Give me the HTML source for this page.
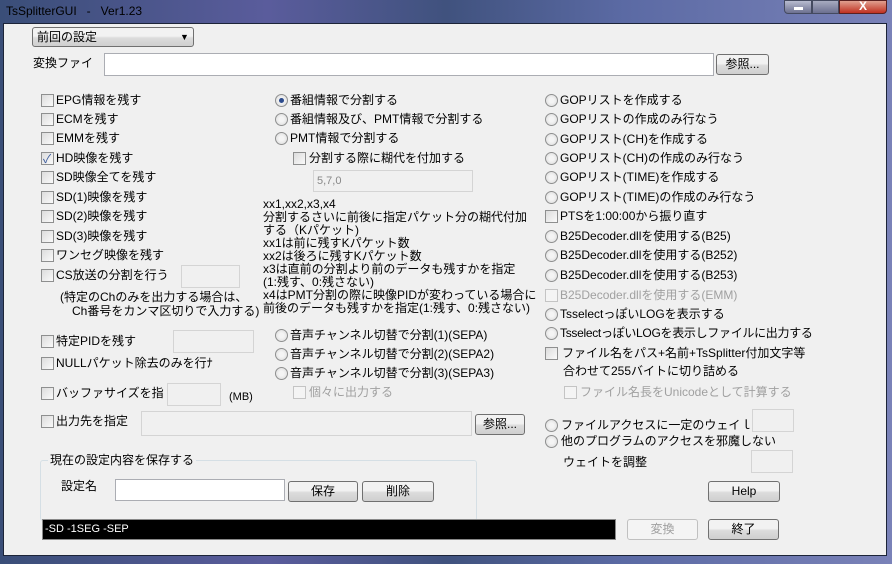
<!DOCTYPE html>
<html><head><meta charset="utf-8"><style>
*{box-sizing:border-box;margin:0;padding:0}
body{width:892px;height:564px;overflow:hidden;position:relative;font-family:"Liberation Sans","Noto Sans CJK JP",sans-serif;font-size:12px;color:#000;background:linear-gradient(90deg,#3a4e78 0%,#5a5c9c 30%,#40527e 50%,#5b6aa4 70%,#7a82b8 100%)}
.a{position:absolute;white-space:nowrap;line-height:14px}
.cl{position:absolute;left:3px;top:23px;width:884px;height:533px;background:#f0f0f0;border:1px solid #1c2438}
.cb{position:absolute;width:13px;height:13px;border:1px solid #8e8f8f;background:linear-gradient(135deg,#dcdcdc,#fafafa)}
.rd{position:absolute;width:13px;height:13px;border-radius:50%;border:1px solid #8e8f8f;background:radial-gradient(circle,#f4f4f4 30%,#d8d8d8 100%)}
.rd.on::after{content:"";position:absolute;left:3px;top:3px;width:5px;height:5px;border-radius:50%;background:#2b4a8c}
.tb{position:absolute;background:#fff;border:1px solid #c8c8c8}
.tb.g{background:#f0f0f0;border-color:#d4d4d4}
.bt{position:absolute;border:1px solid #707070;border-radius:3px;background:linear-gradient(#f2f2f2 45%,#dcdcdc 55%,#cfcfcf);text-align:center;line-height:18px}
.dis{color:#a0a0a0}
</style></head><body>
<div class="a" style="left:6px;top:4px;color:#000;font-size:12px">TsSplitterGUI &nbsp; - &nbsp; Ver1.23</div>
<div style="position:absolute;left:784px;top:0;width:28px;height:14px;border:1px solid #444a60;border-radius:0 0 0 4px;background:linear-gradient(#b8bcd0,#6c7090)"><div style="position:absolute;left:9px;top:6px;width:9px;height:3px;background:#fff"></div></div>
<div style="position:absolute;left:812px;top:0;width:27px;height:14px;border:1px solid #444a60;background:linear-gradient(#a8acc0,#6c7090)"></div>
<div style="position:absolute;left:839px;top:0;width:48px;height:14px;border:1px solid #5a2020;border-radius:0 0 4px 0;background:linear-gradient(#e0a090,#c03020);color:#fff;text-align:center;font-weight:bold;line-height:10px">X</div>
<div class="cl"></div>

<div style="position:absolute;left:32px;top:27px;width:162px;height:20px;border:1px solid #707070;border-radius:3px;background:linear-gradient(#f2f2f2 45%,#dcdcdc 55%,#cfcfcf)"></div>
<div class="a" style="left:37px;top:30px">前回の設定</div><div class="a" style="left:180px;top:30px;font-size:9px">▼</div>
<div class="a" style="left:33px;top:56px">変換ファイ</div>
<div class="tb" style="left:104px;top:53px;width:610px;height:23px;border-color:#abadb3"></div>
<div class="bt" style="left:716px;top:54px;width:53px;height:21px">参照...</div>

<!-- left column -->
<div class="cb" style="left:41px;top:94px"></div><div class="a" style="left:56px;top:93px">EPG情報を残す</div>
<div class="cb" style="left:41px;top:113px"></div><div class="a" style="left:56px;top:112px">ECMを残す</div>
<div class="cb" style="left:41px;top:132px"></div><div class="a" style="left:56px;top:131px">EMMを残す</div>
<div class="cb" style="left:41px;top:152px"><span style="position:absolute;left:1px;top:-3px;color:#3a5a9c;font-size:12px">✓</span></div><div class="a" style="left:56px;top:151px">HD映像を残す</div>
<div class="cb" style="left:41px;top:171px"></div><div class="a" style="left:56px;top:170px">SD映像全てを残す</div>
<div class="cb" style="left:41px;top:191px"></div><div class="a" style="left:56px;top:190px">SD(1)映像を残す</div>
<div class="cb" style="left:41px;top:210px"></div><div class="a" style="left:56px;top:209px">SD(2)映像を残す</div>
<div class="cb" style="left:41px;top:230px"></div><div class="a" style="left:56px;top:229px">SD(3)映像を残す</div>
<div class="cb" style="left:41px;top:249px"></div><div class="a" style="left:56px;top:248px">ワンセグ映像を残す</div>
<div class="cb" style="left:41px;top:269px"></div><div class="a" style="left:56px;top:268px">CS放送の分割を行う</div>
<div class="tb g" style="left:181px;top:265px;width:59px;height:23px"></div>
<div class="a" style="left:60px;top:290px">(特定のChのみを出力する場合は、</div>
<div class="a" style="left:72px;top:304px">Ch番号をカンマ区切りで入力する)</div>
<div class="cb" style="left:41px;top:335px"></div><div class="a" style="left:56px;top:334px">特定PIDを残す</div>
<div class="tb g" style="left:173px;top:330px;width:81px;height:23px"></div>
<div class="cb" style="left:41px;top:357px"></div><div class="a" style="left:56px;top:356px">NULLパケット除去のみを行ﾅ</div>
<div class="cb" style="left:41px;top:387px"></div><div class="a" style="left:56px;top:386px">バッファサイズを指</div>
<div class="tb g" style="left:167px;top:383px;width:54px;height:23px"></div>
<div class="a" style="left:229px;top:390px;font-size:11px">(MB)</div>
<div class="cb" style="left:41px;top:415px"></div><div class="a" style="left:56px;top:414px">出力先を指定</div>
<div class="tb g" style="left:141px;top:411px;width:331px;height:25px"></div>
<div class="bt" style="left:475px;top:414px;width:50px;height:21px">参照...</div>

<div style="position:absolute;left:40px;top:460px;width:437px;height:61px;border:1px solid #d5dfe5;border-radius:3px"></div>
<div class="a" style="left:48px;top:453px;background:#f0f0f0;padding:0 2px">現在の設定内容を保存する</div>
<div class="a" style="left:61px;top:479px">設定名</div>
<div class="tb" style="left:115px;top:479px;width:170px;height:22px;border-color:#abadb3"></div>
<div class="bt" style="left:288px;top:481px;width:70px;height:21px">保存</div>
<div class="bt" style="left:362px;top:481px;width:72px;height:21px">削除</div>
<div style="position:absolute;left:42px;top:519px;width:574px;height:21px;background:#000;border:1px solid #888"></div>
<div class="a" style="left:45px;top:522px;color:#fff;font-size:11px">-SD -1SEG -SEP</div>
<div class="bt dis" style="left:627px;top:519px;width:71px;height:21px;border-color:#c0c0c0;background:#f4f4f4">変換</div>
<div class="bt" style="left:708px;top:519px;width:71px;height:21px">終了</div>
<div class="bt" style="left:708px;top:481px;width:72px;height:21px">Help</div>

<!-- middle column -->
<div class="rd on" style="left:275px;top:94px"></div><div class="a" style="left:290px;top:93px">番組情報で分割する</div>
<div class="rd" style="left:275px;top:113px"></div><div class="a" style="left:290px;top:112px">番組情報及び、PMT情報で分割する</div>
<div class="rd" style="left:275px;top:132px"></div><div class="a" style="left:290px;top:131px">PMT情報で分割する</div>
<div class="cb" style="left:293px;top:152px"></div><div class="a" style="left:309px;top:151px">分割する際に糊代を付加する</div>
<div class="tb g" style="left:313px;top:170px;width:160px;height:22px"></div>
<div class="a" style="left:317px;top:174px;color:#888;font-size:11px">5,7,0</div>
<div class="a" style="left:263px;top:198px;line-height:13px">xx1,xx2,x3,x4<br>分割するさいに前後に指定パケット分の糊代付加<br>する（Kパケット)<br>xx1は前に残すKパケット数<br>xx2は後ろに残すKパケット数<br>x3は直前の分割より前のデータも残すかを指定<br>(1:残す、0:残さない)<br>x4はPMT分割の際に映像PIDが変わっている場合に<br>前後のデータも残すかを指定(1:残す、0:残さない)</div>
<div class="rd" style="left:275px;top:329px"></div><div class="a" style="left:290px;top:328px">音声チャンネル切替で分割(1)(SEPA)</div>
<div class="rd" style="left:275px;top:348px"></div><div class="a" style="left:290px;top:347px">音声チャンネル切替で分割(2)(SEPA2)</div>
<div class="rd" style="left:275px;top:367px"></div><div class="a" style="left:290px;top:366px">音声チャンネル切替で分割(3)(SEPA3)</div>
<div class="cb" style="left:293px;top:386px;border-color:#c4c4c4;background:#f4f4f4"></div><div class="a dis" style="left:309px;top:385px">個々に出力する</div>

<!-- right column -->
<div class="rd" style="left:545px;top:94px"></div><div class="a" style="left:560px;top:93px">GOPリストを作成する</div>
<div class="rd" style="left:545px;top:113px"></div><div class="a" style="left:560px;top:112px">GOPリストの作成のみ行なう</div>
<div class="rd" style="left:545px;top:133px"></div><div class="a" style="left:560px;top:132px">GOPリスト(CH)を作成する</div>
<div class="rd" style="left:545px;top:152px"></div><div class="a" style="left:560px;top:151px">GOPリスト(CH)の作成のみ行なう</div>
<div class="rd" style="left:545px;top:171px"></div><div class="a" style="left:560px;top:170px">GOPリスト(TIME)を作成する</div>
<div class="rd" style="left:545px;top:191px"></div><div class="a" style="left:560px;top:190px">GOPリスト(TIME)の作成のみ行なう</div>
<div class="cb" style="left:545px;top:210px"></div><div class="a" style="left:560px;top:209px">PTSを1:00:00から振り直す</div>
<div class="rd" style="left:545px;top:230px"></div><div class="a" style="left:560px;top:229px">B25Decoder.dllを使用する(B25)</div>
<div class="rd" style="left:545px;top:249px"></div><div class="a" style="left:560px;top:248px">B25Decoder.dllを使用する(B252)</div>
<div class="rd" style="left:545px;top:269px"></div><div class="a" style="left:560px;top:268px">B25Decoder.dllを使用する(B253)</div>
<div class="cb" style="left:545px;top:289px;border-color:#c4c4c4;background:#f4f4f4"></div><div class="a dis" style="left:560px;top:288px">B25Decoder.dllを使用する(EMM)</div>
<div class="rd" style="left:545px;top:308px"></div><div class="a" style="left:560px;top:307px">TsselectっぽいLOGを表示する</div>
<div class="rd" style="left:545px;top:327px"></div><div class="a" style="left:560px;top:326px;letter-spacing:-0.3px">TsselectっぽいLOGを表示しファイルに出力する</div>
<div class="cb" style="left:545px;top:347px"></div><div class="a" style="left:562px;top:346px">ファイル名をパス+名前+TsSplitter付加文字等</div>
<div class="a" style="left:563px;top:364px">合わせて255バイトに切り詰める</div>
<div class="cb" style="left:564px;top:386px;border-color:#c4c4c4;background:#f4f4f4"></div><div class="a dis" style="left:580px;top:385px">ファイル名長をUnicodeとして計算する</div>
<div class="rd" style="left:545px;top:419px"></div><div class="a" style="left:561px;top:418px">ファイルアクセスに一定のウェイｌ</div>
<div class="tb g" style="left:752px;top:409px;width:42px;height:23px"></div>
<div class="rd" style="left:545px;top:435px"></div><div class="a" style="left:561px;top:434px">他のプログラムのアクセスを邪魔しない</div>
<div class="a" style="left:563px;top:455px">ウェイトを調整</div>
<div class="tb g" style="left:751px;top:450px;width:42px;height:23px"></div>
</body></html>
